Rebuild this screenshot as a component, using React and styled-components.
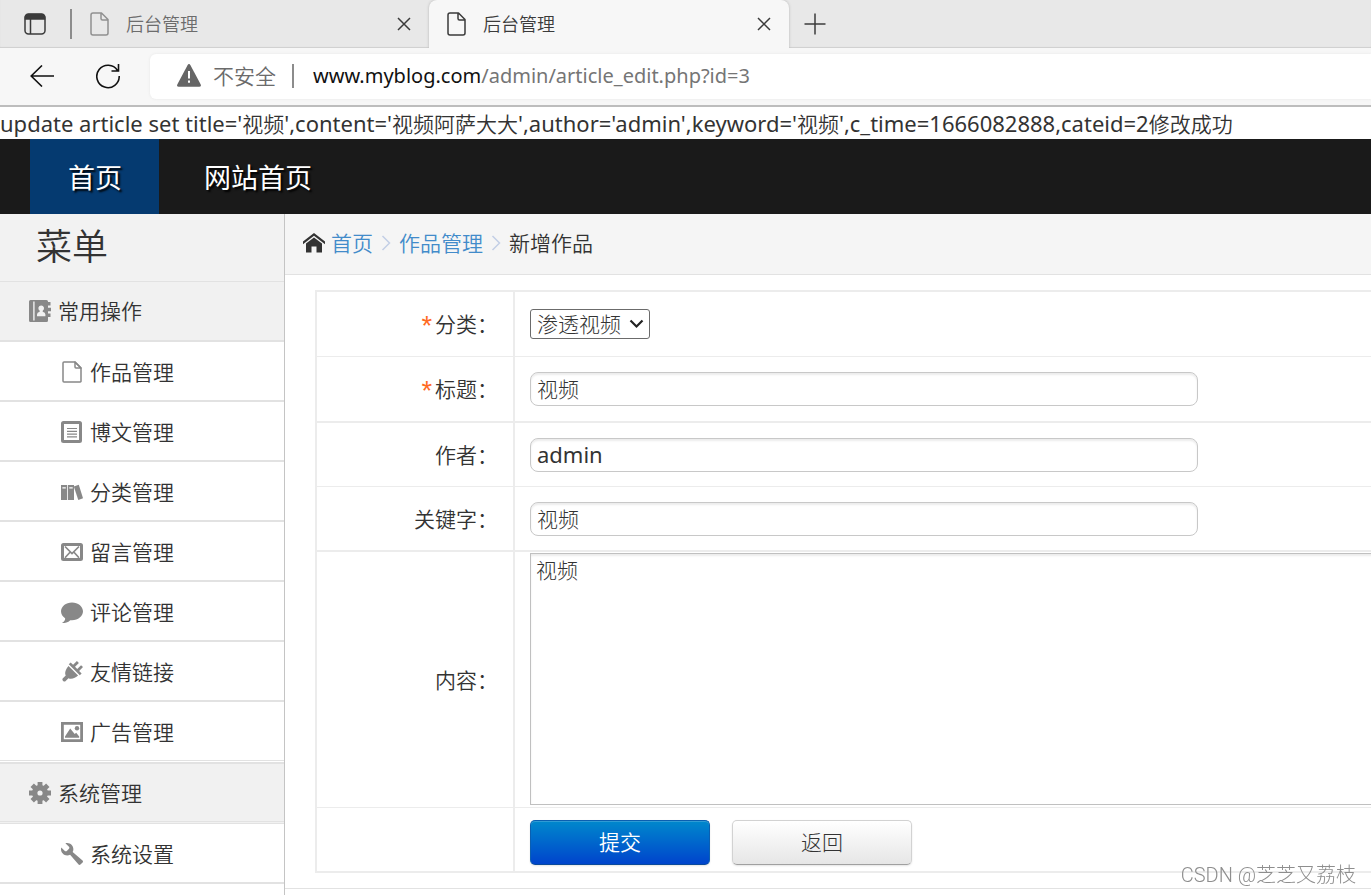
import React from "react";
import styled, { createGlobalStyle } from "styled-components";
import { ImBubble, ImPowerCord, ImWrench } from "react-icons/im";

const Global = createGlobalStyle`
  *, *::before, *::after { box-sizing: border-box; }
  body {
    margin: 0;
    overflow: hidden;
    background: #fff;
    color: #333;
    font-family: "Noto Sans", "Noto Sans CJK SC", sans-serif;
    font-size: 21px;
    font-weight: 350;
    line-height: 32px;
  }
  button, input, select, textarea { font: inherit; color: inherit; margin: 0; }
  a { color: inherit; text-decoration: none; }
`;

const Page = styled.div`
  display: flex;
  flex-direction: column;
  height: 100vh;
  overflow: hidden;
`;

/* Browser window */
const TabStrip = styled.div`
  display: flex;
  align-items: stretch;
  flex: none;
  height: 48px;
  background: #e8e8e8;
  box-shadow: inset 0 -1px 1px #cfcfcf;
`;

const IconButton = styled.button`
  display: flex;
  align-items: center;
  justify-content: center;
  width: ${(p) => p.$width || 24}px;
  padding: 0;
  border: 0;
  background: none;
  color: ${(p) => p.$color || "#3b3b3b"};
`;

const Divider = styled.span`
  width: 2px;
  height: ${(p) => p.$height}px;
  background: #8c8c8c;
  align-self: center;
`;

const Tab = styled.div`
  display: flex;
  align-items: center;
  width: ${(p) => (p.$active ? 360 : 357)}px;
  padding: 0 18px;
  border-radius: 8px 8px 0 0;
  background: ${(p) => (p.$active ? "#f7f7f7" : "transparent")};
  box-shadow: ${(p) => (p.$active ? "0 0 3px #b4b4b4" : "none")};
  color: ${(p) => (p.$active ? "#3b3b3b" : "#6c6c6c")};
`;

const TabTitle = styled.button`
  display: flex;
  align-items: center;
  flex: 1;
  gap: 17px;
  padding: 0;
  border: 0;
  background: none;
  font-size: 18px;
  line-height: 24px;
  text-align: left;
  svg { flex: none; opacity: ${(p) => (p.$active ? 1 : 0.7)}; }
`;

const Toolbar = styled.div`
  display: flex;
  align-items: center;
  flex: none;
  height: 59px;
  padding-left: 30px;
  background: #f7f7f7;
  border-bottom: 2px solid #bdbdbd;
`;

const ToolbarButtons = styled.div`
  display: flex;
  gap: 42px;
  width: 120px;
  padding-bottom: 2px;
`;

const Address = styled.div`
  display: flex;
  align-items: center;
  flex: 1;
  height: 45px;
  padding: 0 0 2px 27px;
  border-radius: 6px 0 0 6px;
  background: #fff;
  box-shadow: 0 0 3px #e6e6e6;
  color: #6b6b6b;
`;

const Security = styled.span`
  display: flex;
  align-items: center;
  gap: 12px;
  margin-right: 16px;
`;

const Url = styled.span`
  margin-left: 19px;
  font-size: 20px;
  font-weight: 400;
  white-space: nowrap;
  color: #757575;
  b { font-weight: 400; color: #111; }
`;

/* Admin page */
const Message = styled.p`
  flex: none;
  margin: 0;
  height: 32px;
  font-size: 22px;
  font-weight: 400;
  white-space: nowrap;
`;

const Han = styled.span`
  font-size: 21px;
  font-weight: 350;
`;

const Nav = styled.nav`
  display: flex;
  flex: none;
  gap: 7px;
  height: 75px;
  padding-left: 30px;
  background: #1a1a1a;
`;

const NavLink = styled.a`
  display: flex;
  align-items: center;
  padding: 2px 37px 0 38px;
  background: ${(p) => (p.$active ? "#053a70" : "transparent")};
  color: #fff;
  font-size: 27px;
  font-weight: 400;
  text-shadow: 2px 2px 2px #000;
`;

const Body = styled.div`
  display: flex;
  flex: 1;
  min-height: 0;
`;

const Sidebar = styled.aside`
  flex: none;
  width: 285px;
  border-right: 1px solid #c4c4c4;
`;

const MenuTitle = styled.h1`
  margin: 0;
  height: 68px;
  padding-left: 36px;
  border-bottom: 1px solid #e2e2e2;
  background: #f2f2f2;
  font-size: 36px;
  font-weight: 350;
  line-height: 66px;
`;

const GroupLink = styled.a`
  display: flex;
  align-items: center;
  gap: 7px;
  height: 60px;
  padding-left: 29px;
  border-bottom: ${(p) => (p.$double ? "3px double" : "2px solid")} #e2e2e2;
  background: #f1f1f1;
  svg { flex: none; color: #888; }
`;

const SubLink = styled.a`
  display: flex;
  align-items: center;
  gap: 7px;
  height: 60px;
  padding: 1px 0 0 61px;
  border-bottom: 2px solid #e2e2e2;
  svg { flex: none; color: #888; }
`;

const SubMenu = styled.ul`
  margin: 0;
  padding: 0;
  list-style: none;
  & + ${GroupLink} {
    height: 62px;
    border-top: 2px solid #e2e2e2;
  }
  &:not(:last-child) li:last-child ${SubLink} {
    height: 59px;
    margin-bottom: 1px;
    border-bottom-width: 1px;
  }
`;

const Main = styled.main`
  flex: 1;
  min-width: 0;
  overflow: hidden;
`;

const Breadcrumb = styled.div`
  display: flex;
  align-items: center;
  height: 61px;
  padding: 0 0 2px 18px;
  border-bottom: 1px solid #e2e2e2;
  background: #f5f5f5;
  a { color: #428bca; }
  a:first-of-type { margin-left: 6px; }
`;

const Crumb = styled.svg`
  flex: none;
  margin: 0 8px;
  color: #c3cfe6;
`;

const Form = styled.form`
  width: 100%;
  margin: 15px 0 15px 30px;
`;

const Table = styled.table`
  width: 100%;
  table-layout: fixed;
  border: 2px solid #ececec;
  border-bottom: 0;
  border-spacing: 0;
`;

const LabelCell = styled.th`
  width: 198px;
  padding: 0 15px 0 0;
  border-right: 2px solid #ececec;
  border-bottom: ${(p) => (p.$thick ? 2 : 1)}px solid #ececec;
  font-weight: inherit;
  text-align: right;
  i {
    color: #ff6a22;
    font-family: "Liberation Mono", monospace;
    font-size: 27px;
    font-style: normal;
    line-height: 16px;
    vertical-align: -4px;
  }
`;

const FieldCell = styled.td`
  height: ${(p) => p.$height || 65}px;
  padding: ${(p) => (p.$flush ? "1px" : "0")} 15px;
  border-bottom: ${(p) => (p.$thick ? 2 : 1)}px solid #ececec;
  vertical-align: ${(p) => (p.$flush ? "top" : "middle")};
`;

const SelectBox = styled.div`
  display: grid;
  align-items: center;
  width: 120px;
  & > * { grid-area: 1 / 1; }
  svg { justify-self: end; margin-right: 6px; pointer-events: none; }
`;

const Select = styled.select`
  width: 100%;
  height: 30px;
  padding: 0 6px;
  border: 1px solid #6b6b6b;
  border-radius: 3px;
  background: #fff;
  appearance: none;
  font-weight: 300;
  line-height: 28px;
`;

const Input = styled.input`
  display: block;
  width: 668px;
  max-width: 100%;
  height: 34px;
  padding: 0 6px 2px;
  border: 1px solid #c8c8c8;
  border-radius: 8px;
  background: #fff;
  box-shadow: inset 0 2px 2px #ececec;
  font-size: ${(p) => (p.$latin ? 22 : 21)}px;
  font-weight: ${(p) => (p.$latin ? 400 : 300)};
`;

const TextArea = styled.textarea`
  display: block;
  width: 100%;
  height: 252px;
  padding: 0 5px;
  border: 1px solid #c0c0c0;
  background: #fff;
  box-shadow: inset 0 2px 2px #ececec;
  font-weight: 300;
  resize: none;
`;

const Actions = styled.div`
  display: flex;
  gap: 22px;
  padding-top: 5px;
`;

const ActionButton = styled.button`
  width: 180px;
  height: 45px;
  padding: 0;
  border: 1px solid ${(p) => (p.$primary ? "#0b5fb0" : "#d2d2d2")};
  border-bottom-color: ${(p) => (p.$primary ? "#0a4a9c" : "#a0a0a0")};
  border-radius: 5px;
  background: ${(p) => (p.$primary ? "linear-gradient(#0088cc, #0044cc)" : "linear-gradient(#ffffff, #e6e6e6)")};
  box-shadow: inset 0 1px 0 ${(p) => (p.$primary ? "#2f9bd5" : "#fff")}, 0 1px 2px #e4e4e4;
  color: ${(p) => (p.$primary ? "#fff" : "#333")};
  font-weight: ${(p) => (p.$primary ? 350 : 300)};
`;

const Footer = styled.footer`
  border-top: 1px solid #e2e2e2;
`;

const Watermark = styled.span`
  position: fixed;
  right: 15px;
  bottom: 4px;
  color: #8e8e8e;
  font-family: Roboto, "Noto Sans CJK SC", sans-serif;
  font-size: 20px;
  font-weight: 300;
`;

const WindowIcon = () => (
  <svg width="22" height="22" viewBox="0 0 22 22" fill="none" stroke="currentColor" strokeWidth="1.5">
    <rect x="1" y="1" width="20" height="20" rx="3.5" />
    <path d="M1.5 3.5q1-2 3-2h13q2 0 3 2V6h-19z" fill="currentColor" />
    <path d="M6.5 6v15" />
  </svg>
);
const PageIcon = () => (
  <svg width="19" height="24" viewBox="0 0 19 24" fill="none" stroke="currentColor" strokeWidth="1.5" strokeLinejoin="round">
    <path d="M3 1h8.500l6.500 6.500V21a2 2 0 0 1-2 2H3a2 2 0 0 1-2-2V3a2 2 0 0 1 2-2zM11 1v5.500a1.500 1.500 0 0 0 1.500 1.500H18" />
  </svg>
);
const CloseIcon = () => (
  <svg width="14" height="14" viewBox="0 0 14 14" stroke="currentColor" strokeWidth="1.500"><path d="M1 1l12 12M13 1L1 13" /></svg>
);
const PlusIcon = () => (
  <svg width="22" height="22" viewBox="0 0 22 22" stroke="currentColor" strokeWidth="1.500"><path d="M11 0.500v21M0.500 11h21" /></svg>
);
const BackIcon = () => (
  <svg width="24" height="22" viewBox="0 0 24 22" fill="none" stroke="currentColor" strokeWidth="1.600"><path d="M12 0.500L1.200 11 12 21.500M1 11h23" /></svg>
);
const ReloadIcon = () => (
  <svg width="24" height="26" viewBox="0 0 24 26" fill="none" stroke="currentColor" strokeWidth="1.600">
    <path d="M21.500 7.500A11.200 11.200 0 1 0 23.200 13M22.500 1v7h-7" />
  </svg>
);
const WarningIcon = () => (
  <svg width="24" height="23" viewBox="0 0 24 23">
    <path d="M10.400 1.400q1.600-2.600 3.200 0l10 18.800q1 2.300-1.400 2.600H1.800Q-0.600 22.500 0.400 20.200z" fill="#666" />
    <path d="M12 7v7.500M12 16.500v2.300" stroke="#fff" strokeWidth="2" />
  </svg>
);
const HomeIcon = () => (
  <svg width="22" height="20" viewBox="0 0 22 20" fill="#333">
    <path d="M11 0l11 8.600v2.600L11 2.800 0 11.200V8.600z" />
    <path d="M11 4.500l8 6.100V19.500h-5.500v-6h-5v6H3v-8.900z" />
  </svg>
);
const ChevronRight = () => (
  <Crumb width="10" height="16" viewBox="0 0 10 16" fill="none" stroke="currentColor" strokeWidth="1.500"><path d="M1.500 1l7 7-7 7" /></Crumb>
);
const ChevronDown = () => (
  <svg width="15" height="10" viewBox="0 0 15 10" fill="none" stroke="#222" strokeWidth="2.200"><path d="M1.500 1.500l6 6 6-6" /></svg>
);
const FileIcon = () => (
  <svg width="22" height="22" viewBox="0 0 22 22" fill="none" stroke="currentColor" strokeWidth="1.500" strokeLinejoin="round">
    <path d="M3 1h11l6 6v13.300a0.700 0.700 0 0 1-0.700 0.700H3a1 1 0 0 1-1-1V2a1 1 0 0 1 1-1z" />
    <path d="M14 1v5a1 1 0 0 0 1 1h5z" />
  </svg>
);
const ArticleIcon = () => (
  <svg width="22" height="22" viewBox="0 0 22 22" fill="none" stroke="currentColor">
    <rect x="1.500" y="1.500" width="18" height="19" rx="1" strokeWidth="3" />
    <path d="M6 7.500h10M6 10.300h10M6 13.100h10M6 15.900h10" strokeWidth="1.200" />
  </svg>
);
const MailIcon = () => (
  <svg width="22" height="18" viewBox="0 0 22 18" fill="none" stroke="currentColor">
    <rect x="1.500" y="1.500" width="19" height="15" rx="1" strokeWidth="3" />
    <path d="M4 3.500l7 7 7-7M4 14.800l5-5.500M18 14.800l-5-5.500" strokeWidth="1.700" />
  </svg>
);
const ContactsIcon = () => (
  <svg width="22" height="22" viewBox="0 0 22 22" fill="currentColor">
    <path fillRule="evenodd" d="M1.500 0H17.500a1.500 1.500 0 0 1 1.500 1.500V2h2.500v3.500H19v2.200h3v3.600H19v2.200h2.500V17H19v3.500A1.500 1.500 0 0 1 17.500 22H1.500A1.500 1.500 0 0 1 0 20.500v-19A1.500 1.500 0 0 1 1.500 0zM4.200 1.500v19h1.400v-19zM12.200 5.500a2.800 2.800 0 0 0-1.500 5.200v1q-2.700 0.600-2.700 2.800v1.700h8.400v-1.700q0-2.200-2.700-2.800v-1a2.800 2.800 0 0 0-1.500-5.200z" />
  </svg>
);
const BooksIcon = () => (
  <svg width="22" height="22" viewBox="0 0 22 22" fill="currentColor">
    <path fillRule="evenodd" d="M0 4h6.200v15H0zM1.400 6.200v1.300h3.400V6.200zM7 4h6v15H7zM8.300 6.200v1.300h3.400V6.200z" />
    <path d="M12.800 5.400l5-1.700L22 17.300l-4.700 1.700z" />
  </svg>
);
const PictureIcon = () => (
  <svg width="22" height="20" viewBox="0 0 22 20" fill="currentColor">
    <path fillRule="evenodd" d="M0 0h22v20H0zM2.800 2.800v14.400h16.400V2.800z" />
    <circle cx="16" cy="6.200" r="2.200" />
    <path d="M4 15.800V14.500l5.200-8 4.500 5.500 1.500-1.200 3 3.700v1.300z" />
  </svg>
);
const GearIcon = () => (
  <svg width="22" height="22" viewBox="-11 -11 22 22" fill="none" stroke="currentColor">
    <circle r="5.300" strokeWidth="5.400" />
    {[0, 45, 90, 135].map((angle) => (
      <path key={angle} d="M0-11v4M0 7v4" strokeWidth="4.800" transform={`rotate(${angle})`} />
    ))}
  </svg>
);

const articleMenu = [
  ["作品管理", FileIcon],
  ["博文管理", ArticleIcon],
  ["分类管理", BooksIcon],
  ["留言管理", MailIcon],
  ["评论管理", ImBubble],
  ["友情链接", ImPowerCord],
  ["广告管理", PictureIcon],
];
const systemMenu = [["系统设置", ImWrench]];

const Menu = ({ items }) => (
  <SubMenu>
    {items.map(([name, Icon]) => (
      <li key={name}>
        <SubLink href="#"><Icon size={22} />{name}</SubLink>
      </li>
    ))}
  </SubMenu>
);

const FormRow = ({ id, label, required, thick, height, flush, children }) => (
  <tr>
    <LabelCell scope="row" $thick={thick}>
      {label && <label htmlFor={id}>{required && <i>*</i>}{label}：</label>}
    </LabelCell>
    <FieldCell $thick={thick} $height={height} $flush={flush}>{children}</FieldCell>
  </tr>
);

const BrowserTab = ({ active, title }) => (
  <Tab $active={active}>
    <TabTitle $active={active}><PageIcon />{title}</TabTitle>
    <IconButton $width={14} aria-label="关闭"><CloseIcon /></IconButton>
  </Tab>
);

export default function App() {
  return (
    <Page>
      <Global />
      <TabStrip>
        <IconButton $width={70} aria-label="标签页"><WindowIcon /></IconButton>
        <Divider $height={30} />
        <BrowserTab title="后台管理" />
        <BrowserTab title="后台管理" active />
        <IconButton $width={52} aria-label="新建标签页"><PlusIcon /></IconButton>
      </TabStrip>
      <Toolbar>
        <ToolbarButtons>
          <IconButton $color="#111" aria-label="返回"><BackIcon /></IconButton>
          <IconButton $color="#111" aria-label="刷新"><ReloadIcon /></IconButton>
        </ToolbarButtons>
        <Address>
          <Security><WarningIcon />不安全</Security>
          <Divider $height={24} />
          <Url><b>www.myblog.com</b>/admin/article_edit.php?id=3</Url>
        </Address>
      </Toolbar>
      <Message>
        update article set title='<Han>视频</Han>',content='<Han>视频阿萨大大</Han>',author='admin',keyword='<Han>视频</Han>',c_time=1666082888,cateid=2<Han>修改成功</Han>
      </Message>
      <Nav>
        <NavLink href="#" $active>首页</NavLink>
        <NavLink href="#">网站首页</NavLink>
      </Nav>
      <Body>
        <Sidebar>
          <MenuTitle>菜单</MenuTitle>
          <GroupLink href="#"><ContactsIcon />常用操作</GroupLink>
          <Menu items={articleMenu} />
          <GroupLink href="#" $double><GearIcon />系统管理</GroupLink>
          <Menu items={systemMenu} />
        </Sidebar>
        <Main>
          <Breadcrumb>
            <HomeIcon />
            <a href="#">首页</a>
            <ChevronRight />
            <a href="#">作品管理</a>
            <ChevronRight />
            <span>新增作品</span>
          </Breadcrumb>
          <Form onSubmit={(e) => e.preventDefault()}>
            <Table>
              <tbody>
                <FormRow id="category" label="分类" required>
                  <SelectBox>
                    <Select id="category"><option>渗透视频</option></Select>
                    <ChevronDown />
                  </SelectBox>
                </FormRow>
                <FormRow id="title" label="标题" required thick height={66}>
                  <Input id="title" defaultValue="视频" />
                </FormRow>
                <FormRow id="author" label="作者" height={64}>
                  <Input id="author" $latin defaultValue="admin" />
                </FormRow>
                <FormRow id="keyword" label="关键字" thick>
                  <Input id="keyword" defaultValue="视频" />
                </FormRow>
                <FormRow id="content" label="内容" height={256} flush>
                  <TextArea id="content" defaultValue="视频" />
                </FormRow>
                <FormRow thick>
                  <Actions>
                    <ActionButton $primary type="submit">提交</ActionButton>
                    <ActionButton type="button">返回</ActionButton>
                  </Actions>
                </FormRow>
              </tbody>
            </Table>
          </Form>
          <Footer />
        </Main>
      </Body>
      <Watermark>CSDN @芝芝又荔枝</Watermark>
    </Page>
  );
}
